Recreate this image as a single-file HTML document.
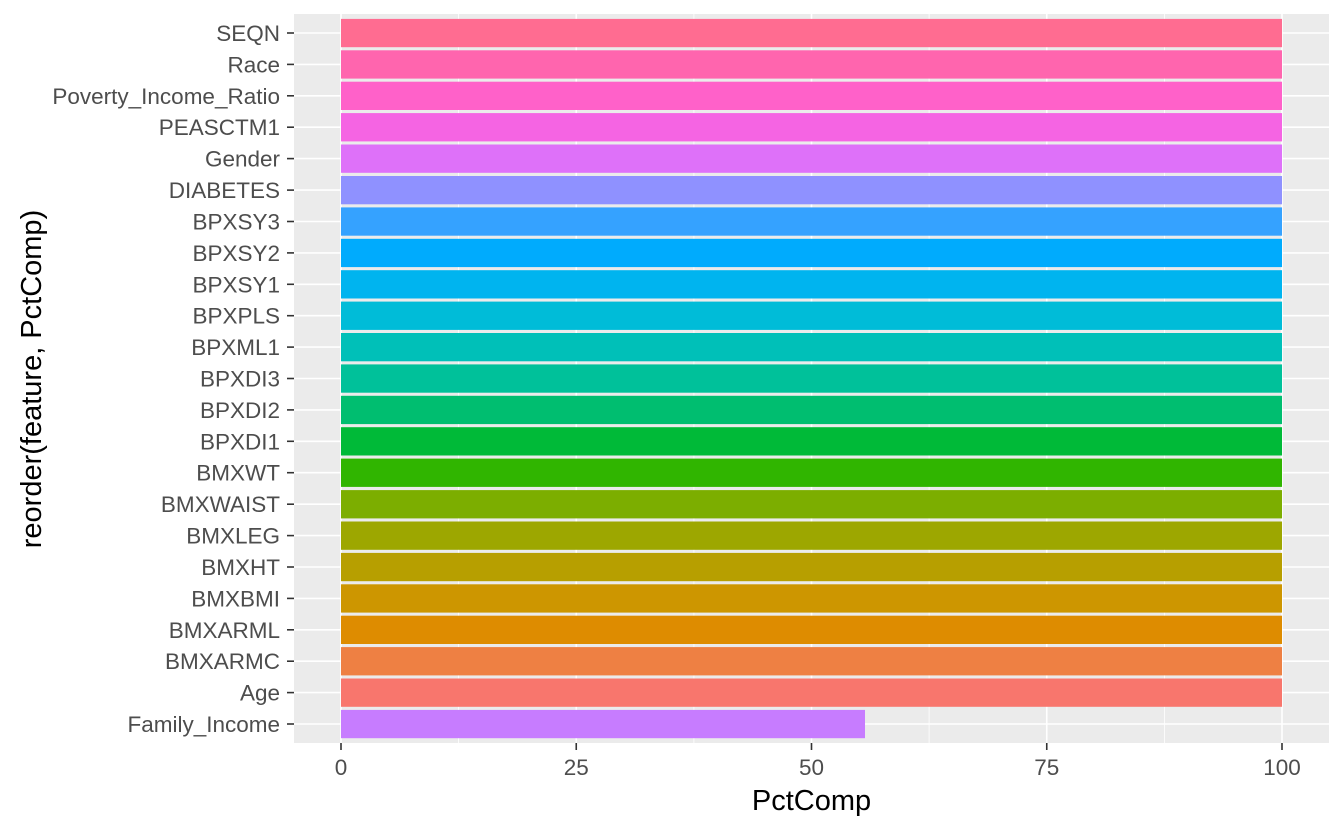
<!DOCTYPE html>
<html><head><meta charset="utf-8"><style>html,body{margin:0;padding:0;background:#fff}svg{display:block}</style></head>
<body>
<svg width="1344" height="830" xmlns="http://www.w3.org/2000/svg" font-family="Liberation Sans, Arial, sans-serif">
<rect x="294" y="14" width="1035" height="729" fill="#EBEBEB"/>
<g stroke="#fff" stroke-width="0.8">
<line x1="458.6" y1="14" x2="458.6" y2="743"/><line x1="693.9" y1="14" x2="693.9" y2="743"/><line x1="929.1" y1="14" x2="929.1" y2="743"/><line x1="1164.4" y1="14" x2="1164.4" y2="743"/>
</g>
<g stroke="#fff" stroke-width="1.6">
<line x1="341" y1="14" x2="341" y2="743"/><line x1="576.25" y1="14" x2="576.25" y2="743"/><line x1="811.5" y1="14" x2="811.5" y2="743"/><line x1="1046.75" y1="14" x2="1046.75" y2="743"/><line x1="1282" y1="14" x2="1282" y2="743"/>
<line x1="294" x2="1329" y1="33" y2="33"/><line x1="294" x2="1329" y1="64.4" y2="64.4"/><line x1="294" x2="1329" y1="95.8" y2="95.8"/><line x1="294" x2="1329" y1="127.2" y2="127.2"/><line x1="294" x2="1329" y1="158.6" y2="158.6"/><line x1="294" x2="1329" y1="190.1" y2="190.1"/><line x1="294" x2="1329" y1="221.5" y2="221.5"/><line x1="294" x2="1329" y1="252.9" y2="252.9"/><line x1="294" x2="1329" y1="284.3" y2="284.3"/><line x1="294" x2="1329" y1="315.7" y2="315.7"/><line x1="294" x2="1329" y1="347.1" y2="347.1"/><line x1="294" x2="1329" y1="378.5" y2="378.5"/><line x1="294" x2="1329" y1="409.9" y2="409.9"/><line x1="294" x2="1329" y1="441.3" y2="441.3"/><line x1="294" x2="1329" y1="472.7" y2="472.7"/><line x1="294" x2="1329" y1="504.2" y2="504.2"/><line x1="294" x2="1329" y1="535.6" y2="535.6"/><line x1="294" x2="1329" y1="567" y2="567"/><line x1="294" x2="1329" y1="598.4" y2="598.4"/><line x1="294" x2="1329" y1="629.8" y2="629.8"/><line x1="294" x2="1329" y1="661.2" y2="661.2"/><line x1="294" x2="1329" y1="692.6" y2="692.6"/><line x1="294" x2="1329" y1="724" y2="724"/>
</g>
<g>
<rect x="341" width="941" height="28.3" y="18.9" fill="#FF6C91"/>
<rect x="341" width="941" height="28.3" y="50.3" fill="#FF65AE"/>
<rect x="341" width="941" height="28.3" y="81.7" fill="#FF61C9"/>
<rect x="341" width="941" height="28.3" y="113.1" fill="#F564E3"/>
<rect x="341" width="941" height="28.3" y="144.5" fill="#DE71F9"/>
<rect x="341" width="941" height="28.3" y="176" fill="#8F91FF"/>
<rect x="341" width="941" height="28.3" y="207.4" fill="#35A2FF"/>
<rect x="341" width="941" height="28.3" y="238.8" fill="#00ABFD"/>
<rect x="341" width="941" height="28.3" y="270.2" fill="#00B4EF"/>
<rect x="341" width="941" height="28.3" y="301.6" fill="#00BCD8"/>
<rect x="341" width="941" height="28.3" y="333" fill="#00C0B8"/>
<rect x="341" width="941" height="28.3" y="364.4" fill="#00C19A"/>
<rect x="341" width="941" height="28.3" y="395.8" fill="#00BE70"/>
<rect x="341" width="941" height="28.3" y="427.2" fill="#00BA38"/>
<rect x="341" width="941" height="28.3" y="458.6" fill="#30B500"/>
<rect x="341" width="941" height="28.3" y="490.1" fill="#7CAE00"/>
<rect x="341" width="941" height="28.3" y="521.5" fill="#9DA700"/>
<rect x="341" width="941" height="28.3" y="552.9" fill="#B79F00"/>
<rect x="341" width="941" height="28.3" y="584.3" fill="#CD9600"/>
<rect x="341" width="941" height="28.3" y="615.7" fill="#DE8C00"/>
<rect x="341" width="941" height="28.3" y="647.1" fill="#EE8043"/>
<rect x="341" width="941" height="28.3" y="678.5" fill="#F8766D"/>
<rect x="341" width="524" height="28.3" y="709.9" fill="#C77CFF"/>
</g>
<g stroke="#333" stroke-width="1.6">
<line x1="287" x2="294" y1="33" y2="33"/><line x1="287" x2="294" y1="64.4" y2="64.4"/><line x1="287" x2="294" y1="95.8" y2="95.8"/><line x1="287" x2="294" y1="127.2" y2="127.2"/><line x1="287" x2="294" y1="158.6" y2="158.6"/><line x1="287" x2="294" y1="190.1" y2="190.1"/><line x1="287" x2="294" y1="221.5" y2="221.5"/><line x1="287" x2="294" y1="252.9" y2="252.9"/><line x1="287" x2="294" y1="284.3" y2="284.3"/><line x1="287" x2="294" y1="315.7" y2="315.7"/><line x1="287" x2="294" y1="347.1" y2="347.1"/><line x1="287" x2="294" y1="378.5" y2="378.5"/><line x1="287" x2="294" y1="409.9" y2="409.9"/><line x1="287" x2="294" y1="441.3" y2="441.3"/><line x1="287" x2="294" y1="472.7" y2="472.7"/><line x1="287" x2="294" y1="504.2" y2="504.2"/><line x1="287" x2="294" y1="535.6" y2="535.6"/><line x1="287" x2="294" y1="567" y2="567"/><line x1="287" x2="294" y1="598.4" y2="598.4"/><line x1="287" x2="294" y1="629.8" y2="629.8"/><line x1="287" x2="294" y1="661.2" y2="661.2"/><line x1="287" x2="294" y1="692.6" y2="692.6"/><line x1="287" x2="294" y1="724" y2="724"/>
<line x1="341" x2="341" y1="743" y2="750"/><line x1="576.25" x2="576.25" y1="743" y2="750"/><line x1="811.5" x2="811.5" y1="743" y2="750"/><line x1="1046.75" x2="1046.75" y1="743" y2="750"/><line x1="1282" x2="1282" y1="743" y2="750"/>
</g>
<g fill="#4D4D4D" font-size="22.5" text-anchor="end">
<text x="280" y="41">SEQN</text><text x="280" y="72.4">Race</text><text x="280" y="103.8">Poverty_Income_Ratio</text><text x="280" y="135.2">PEASCTM1</text><text x="280" y="166.6">Gender</text><text x="280" y="198.1">DIABETES</text><text x="280" y="229.5">BPXSY3</text><text x="280" y="260.9">BPXSY2</text><text x="280" y="292.3">BPXSY1</text><text x="280" y="323.7">BPXPLS</text><text x="280" y="355.1">BPXML1</text><text x="280" y="386.5">BPXDI3</text><text x="280" y="417.9">BPXDI2</text><text x="280" y="449.3">BPXDI1</text><text x="280" y="480.7">BMXWT</text><text x="280" y="512.2">BMXWAIST</text><text x="280" y="543.6">BMXLEG</text><text x="280" y="575">BMXHT</text><text x="280" y="606.4">BMXBMI</text><text x="280" y="637.8">BMXARML</text><text x="280" y="669.2">BMXARMC</text><text x="280" y="700.6">Age</text><text x="280" y="732">Family_Income</text>
</g>
<g fill="#4D4D4D" font-size="22.5" text-anchor="middle">
<text x="341" y="775">0</text><text x="576.25" y="775">25</text><text x="811.5" y="775">50</text><text x="1046.75" y="775">75</text><text x="1282" y="775">100</text>
</g>
<text x="811.5" y="810" font-size="29" text-anchor="middle" fill="#000">PctComp</text>
<text transform="translate(41,379) rotate(-90)" font-size="29" text-anchor="middle" fill="#000">reorder(feature, PctComp)</text>
</svg>
</body></html>
